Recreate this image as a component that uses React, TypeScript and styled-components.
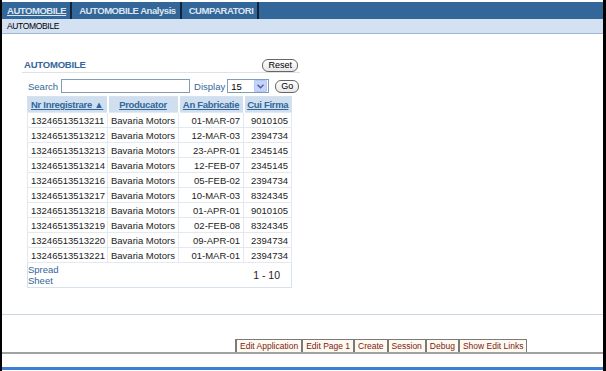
import styled, { createGlobalStyle } from 'styled-components';

const GlobalStyle = createGlobalStyle`
  html, body { margin: 0; padding: 0; background: #fff; }
  body { font-family: "Liberation Sans", Arial, sans-serif; }
`;

const rows = [
  ['13246513513211', 'Bavaria Motors', '01-MAR-07', '9010105'],
  ['13246513513212', 'Bavaria Motors', '12-MAR-03', '2394734'],
  ['13246513513213', 'Bavaria Motors', '23-APR-01', '2345145'],
  ['13246513513214', 'Bavaria Motors', '12-FEB-07', '2345145'],
  ['13246513513216', 'Bavaria Motors', '05-FEB-02', '2394734'],
  ['13246513513217', 'Bavaria Motors', '10-MAR-03', '8324345'],
  ['13246513513218', 'Bavaria Motors', '01-APR-01', '9010105'],
  ['13246513513219', 'Bavaria Motors', '02-FEB-08', '8324345'],
  ['13246513513220', 'Bavaria Motors', '09-APR-01', '2394734'],
  ['13246513513221', 'Bavaria Motors', '01-MAR-01', '2394734'],
];

const columns = [
  { label: 'Nr Inregistrare ▲', width: 80 },
  { label: 'Producator', width: 71 },
  { label: 'An Fabricatie', width: 65 },
  { label: 'Cui Firma', width: 48 },
];

const devLinks = ['Edit Application', 'Edit Page 1', 'Create', 'Session', 'Debug', 'Show Edit Links'];

const Page = styled.div`
  width: 606px;
  height: 371px;
  box-sizing: border-box;
  border-left: 2px solid #000;
  border-right: 3px solid #000;
  padding-top: 2px;
  display: flex;
  flex-direction: column;
  overflow: hidden;
  background: #fff;
`;

const TabBar = styled.div`
  height: 17px;
  background: #336699;
  display: flex;
  align-items: stretch;
  padding-left: 4px;
`;

const Tab = styled.div<{ $current?: boolean }>`
  display: flex;
  align-items: center;
  padding: 0 4px 0 1px;
  font-size: 9.5px;
  font-weight: bold;
  letter-spacing: -0.45px;
  color: #dde6f0;
  text-decoration: ${(p) => (p.$current ? 'underline' : 'none')};
  border-right: 2px solid #10243a;
  margin-right: 6px;
  white-space: nowrap;
`;

const Breadcrumb = styled.div`
  height: 14px;
  background: #d3e1f2;
  border-bottom: 1px solid #9fb5d3;
  font-size: 8.5px;
  letter-spacing: -0.35px;
  display: flex;
  align-items: center;
  padding-left: 5px;
  color: #000;
`;

const Body = styled.div`
  padding: 24px 0 26px 20px;
`;

const Region = styled.div`
  width: 278px;
`;

const RegionHeader = styled.div`
  display: flex;
  justify-content: space-between;
  align-items: flex-end;
  height: 14px;
  border-bottom: 1px solid #dde2e8;
  padding: 0 2px;
`;

const RegionTitle = styled.div`
  font-size: 9.5px;
  font-weight: bold;
  color: #336699;
  letter-spacing: -0.2px;
  padding-bottom: 2px;
`;

const SmallButton = styled.button`
  font-family: inherit;
  font-size: 9px;
  height: 13px;
  padding: 0 5px;
  border: 1px solid #666;
  border-radius: 6px;
  background: linear-gradient(#ffffff, #e8e8e8);
  color: #000;
  line-height: 11px;
`;

const SearchRow = styled.div`
  display: flex;
  align-items: center;
  margin-top: 6px;
  padding-left: 6px;
  height: 14px;
  font-size: 9.5px;
  color: #336699;
`;

const SearchInput = styled.div`
  width: 127px;
  height: 12px;
  border: 1px solid #7f9db9;
  margin: 0 4px 0 3px;
  background: #fff;
`;

const Select = styled.div`
  width: 37px;
  height: 12px;
  border: 1px solid #7f9db9;
  margin-left: 2px;
  display: flex;
  align-items: center;
  justify-content: space-between;
  color: #000;
  font-size: 9.5px;
  padding-left: 3px;
`;

const SelectArrow = styled.div`
  width: 11px;
  height: 10px;
  margin-right: 1px;
  background: #c3d3fd;
  border: 1px solid #b4c8f6;
  border-radius: 1px;
  display: flex;
  align-items: center;
  justify-content: center;
`;

const GoWrap = styled.div`
  margin-left: 6px;
`;

const Table = styled.table`
  border-collapse: collapse;
  table-layout: fixed;
  width: 265px;
  margin: 3px 0 0 5px;
  font-size: 9.5px;
  border: 1px solid #d7e2ee;
`;

const Th = styled.th`
  background: #cfdff0;
  color: #336699;
  font-weight: bold;
  text-decoration: underline;
  letter-spacing: -0.3px;
  height: 15px;
  padding: 0 2px;
  border-left: 2px solid #fff;
  white-space: nowrap;
  overflow: hidden;
  &:first-child { border-left: none; text-align: left; padding-left: 3px; }
`;

const Td = styled.td<{ $right?: boolean }>`
  height: 14px;
  padding: 0 3px;
  text-align: ${(p) => (p.$right ? 'right' : 'left')};
  border: 1px solid #e3e9f0;
  color: #1c1c1c;
  white-space: nowrap;
  overflow: hidden;
`;

const FooterCell = styled.td`
  height: 24px;
  padding: 0;
  color: #336699;
  font-size: 9.5px;
  line-height: 11px;
  vertical-align: middle;
`;

const Pagination = styled.td`
  text-align: right;
  padding-right: 11px;
  font-size: 10.5px;
  color: #222;
`;

const Divider = styled.div`
  height: 1px;
  background: #c7d3e6;
`;

const DevBar = styled.div`
  display: flex;
  padding-left: 233px;
  margin-top: 24px;
  height: 13px;
  border-bottom: 2px solid #a2a2a2;
`;

const DevLink = styled.div`
  height: 13px;
  box-sizing: border-box;
  border: 1px solid #7a7a7a;
  border-bottom: none;
  border-left-width: 2px;
  background: #fffaf0;
  color: #7a1a1a;
  font-size: 8.5px;
  padding: 0 3px;
  display: flex;
  align-items: center;
  white-space: nowrap;
  & + & { border-left-width: 1px; }
`;

const Spacer = styled.div`
  flex: 1;
`;

const BottomLine = styled.div`
  height: 3px;
  background: #3d7ed6;
  margin-bottom: 1px;
`;

export default function App() {
  return (
    <>
      <GlobalStyle />
      <Page>
        <TabBar>
          <Tab $current>AUTOMOBILE</Tab>
          <Tab>AUTOMOBILE Analysis</Tab>
          <Tab>CUMPARATORI</Tab>
        </TabBar>
        <Breadcrumb>AUTOMOBILE</Breadcrumb>
        <Body>
          <Region>
            <RegionHeader>
              <RegionTitle>AUTOMOBILE</RegionTitle>
              <SmallButton>Reset</SmallButton>
            </RegionHeader>
            <SearchRow>
              Search
              <SearchInput />
              Display
              <Select>
                15
                <SelectArrow>
                  <svg width="7" height="5" viewBox="0 0 7 5">
                    <path d="M0.5 0.8 L3.5 3.8 L6.5 0.8" fill="none" stroke="#4d6185" strokeWidth="1.4" />
                  </svg>
                </SelectArrow>
              </Select>
              <GoWrap>
                <SmallButton>Go</SmallButton>
              </GoWrap>
            </SearchRow>
            <Table>
              <colgroup>
                {columns.map((c) => (
                  <col key={c.label} style={{ width: c.width }} />
                ))}
              </colgroup>
              <thead>
                <tr>
                  {columns.map((c) => (
                    <Th key={c.label}>{c.label}</Th>
                  ))}
                </tr>
              </thead>
              <tbody>
                {rows.map((r) => (
                  <tr key={r[0]}>
                    <Td>{r[0]}</Td>
                    <Td>{r[1]}</Td>
                    <Td $right>{r[2]}</Td>
                    <Td $right>{r[3]}</Td>
                  </tr>
                ))}
                <tr>
                  <FooterCell>
                    Spread
                    <br />
                    Sheet
                  </FooterCell>
                  <td />
                  <Pagination colSpan={2}>1 - 10</Pagination>
                </tr>
              </tbody>
            </Table>
          </Region>
        </Body>
        <Divider />
        <DevBar>
          {devLinks.map((l) => (
            <DevLink key={l}>{l}</DevLink>
          ))}
        </DevBar>
        <Spacer />
        <BottomLine />
      </Page>
    </>
  );
}
